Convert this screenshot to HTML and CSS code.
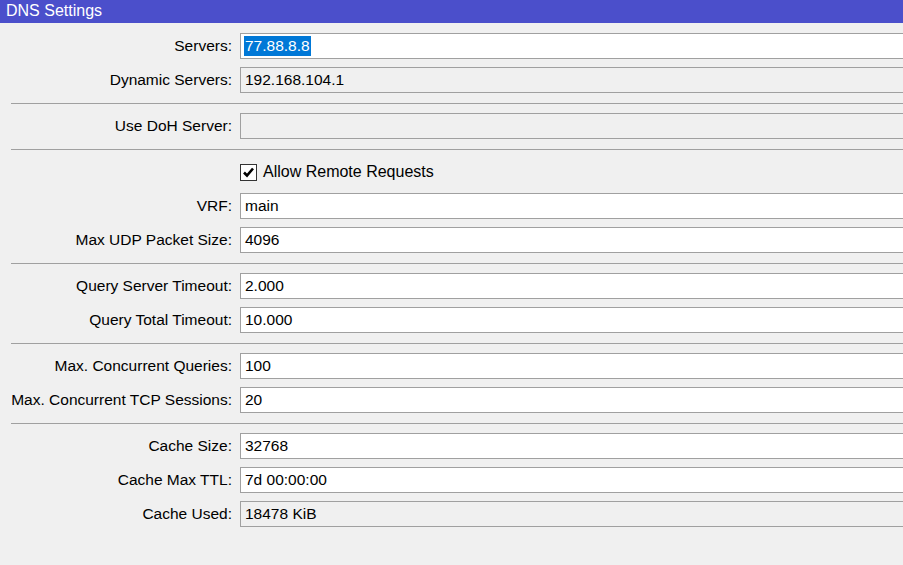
FILE: index.html
```html
<!DOCTYPE html>
<html>
<head>
<meta charset="utf-8">
<link rel="stylesheet" href="styles.css">
</head>
<body>
<div class="titlebar">DNS Settings</div>
<div class="form">
  <div class="section first">
    <div class="row"><div class="label">Servers:</div><div class="field"><span class="sel">77.88.8.8</span></div></div>
    <div class="row"><div class="label">Dynamic Servers:</div><div class="field ro">192.168.104.1</div></div>
  </div>
  <div class="sep"></div>
  <div class="section">
    <div class="row"><div class="label">Use DoH Server:</div><div class="field ro"></div></div>
  </div>
  <div class="sep"></div>
  <div class="section">
    <div class="row"><div class="label"></div><div class="check"><span class="box"><svg width="15" height="15" viewBox="0 0 15 15"><path d="M3 7.5 L6 10.5 L12 3.5" fill="none" stroke="#000" stroke-width="2.6"/></svg></span><span>Allow Remote Requests</span></div></div>
    <div class="row"><div class="label">VRF:</div><div class="field">main</div></div>
    <div class="row"><div class="label">Max UDP Packet Size:</div><div class="field">4096</div></div>
  </div>
  <div class="sep"></div>
  <div class="section">
    <div class="row"><div class="label">Query Server Timeout:</div><div class="field">2.000</div></div>
    <div class="row"><div class="label">Query Total Timeout:</div><div class="field">10.000</div></div>
  </div>
  <div class="sep"></div>
  <div class="section">
    <div class="row"><div class="label">Max. Concurrent Queries:</div><div class="field">100</div></div>
    <div class="row"><div class="label">Max. Concurrent TCP Sessions:</div><div class="field">20</div></div>
  </div>
  <div class="sep"></div>
  <div class="section">
    <div class="row"><div class="label">Cache Size:</div><div class="field">32768</div></div>
    <div class="row"><div class="label">Cache Max TTL:</div><div class="field">7d 00:00:00</div></div>
    <div class="row"><div class="label">Cache Used:</div><div class="field ro">18478 KiB</div></div>
  </div>
</div>
</body>
</html>
```
FILE: styles.css
```css
html, body {
  margin: 0;
  padding: 0;
  background: #f0f0f0;
  overflow: hidden;
}
body {
  width: 903px;
  height: 565px;
  font-family: "Liberation Sans", Arial, sans-serif;
  color: #000;
}
.titlebar {
  height: 23px;
  background: #4b4fcb;
  color: #fff;
  font-size: 16px;
  line-height: 21px;
  padding-left: 6px;
  box-sizing: border-box;
}
.form {
  width: 920px;
}
.section {
  display: flex;
  flex-direction: column;
  gap: 8px;
  padding: 9px 0 10px 0;
}
.section.first {
  padding-top: 10px;
}
.sep {
  margin-left: 11px;
  border-top: 1px solid #a0a0a0;
}
.row {
  display: grid;
  grid-template-columns: 232px 1fr;
  column-gap: 8px;
  height: 26px;
  align-items: center;
}
.label {
  text-align: right;
  font-size: 15.5px;
  line-height: 26px;
  white-space: nowrap;
}
.field {
  height: 26px;
  box-sizing: border-box;
  border: 1px solid #a0a0a0;
  background: #fff;
  font-size: 15.5px;
  line-height: 24px;
  padding-left: 4px;
  white-space: nowrap;
}
.field.ro {
  background: #f0f0f0;
}
.sel {
  display: inline-block;
  background: #0078d7;
  color: #fff;
  line-height: 20px;
  margin-left: -1px;
  padding: 0 1px;
  vertical-align: top;
  margin-top: 2px;
}
.check {
  display: flex;
  align-items: center;
  gap: 6px;
  font-size: 16px;
}
.box {
  width: 17px;
  height: 17px;
  box-sizing: border-box;
  border: 1px solid #333;
  background: #fff;
  display: flex;
  align-items: center;
  justify-content: center;
}
.box svg {
  display: block;
}
```
